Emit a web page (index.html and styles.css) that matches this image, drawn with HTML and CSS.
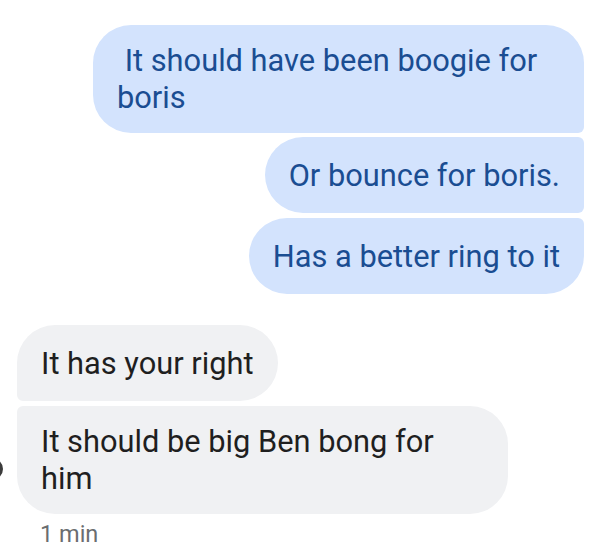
FILE: index.html
```html
<!DOCTYPE html>
<html>
<head>
<meta charset="utf-8">
<link rel="stylesheet" href="styles.css">
</head>
<body>
<div class="thread">
  <div class="group out">
    <div class="bubble first">&nbsp;It should have been boogie for boris</div>
    <div class="bubble mid">Or bounce for boris.</div>
    <div class="bubble last">Has a better ring to it</div>
  </div>
  <div class="group in">
    <div class="bubble first">It has your right</div>
    <div class="bubble last">It should be big Ben bong for him<span class="avatar"></span></div>
    <div class="time">1 min</div>
  </div>
</div>
</body>
</html>
```
FILE: styles.css
```css
html, body {
  margin: 0;
  padding: 0;
  background: #ffffff;
}
body {
  width: 600px;
  height: 548px;
  overflow: hidden;
  font-family: Roboto, "Noto Sans", sans-serif;
}
.thread {
  display: flex;
  flex-direction: column;
  padding: 25px 16px 0 17px;
  gap: 31px;
}
.group {
  display: flex;
  flex-direction: column;
  gap: 4px;
}
.group.out {
  align-items: flex-end;
}
.group.in {
  align-items: flex-start;
}
.bubble {
  position: relative;
  box-sizing: border-box;
  max-width: 491px;
  min-height: 76px;
  padding: 17px 24px;
  font-size: 30.8px;
  line-height: 37px;
  display: flex;
  align-items: center;
  border-radius: 38px;
}
.out .bubble {
  background: #d3e3fd;
  color: #1a4d92;
}
.in .bubble {
  background: #f0f1f3;
  color: #1f1f1f;
}
.out .first { border-bottom-right-radius: 6px; }
.out .mid { border-top-right-radius: 6px; border-bottom-right-radius: 6px; }
.out .last { border-top-right-radius: 6px; margin-top: 1px; }
.in .first { border-bottom-left-radius: 6px; }
.in .last { border-top-left-radius: 6px; margin-top: 1px; }
.avatar {
  position: absolute;
  left: -36px;
  top: 52px;
  width: 14px;
  height: 14px;
  border-radius: 50%;
  border: 4px solid #3c3c3c;
  background: #ffffff;
}
.time {
  margin-top: 1px;
  padding-left: 23px;
  font-size: 23.5px;
  line-height: 30px;
  color: #6a6d70;
}
```
